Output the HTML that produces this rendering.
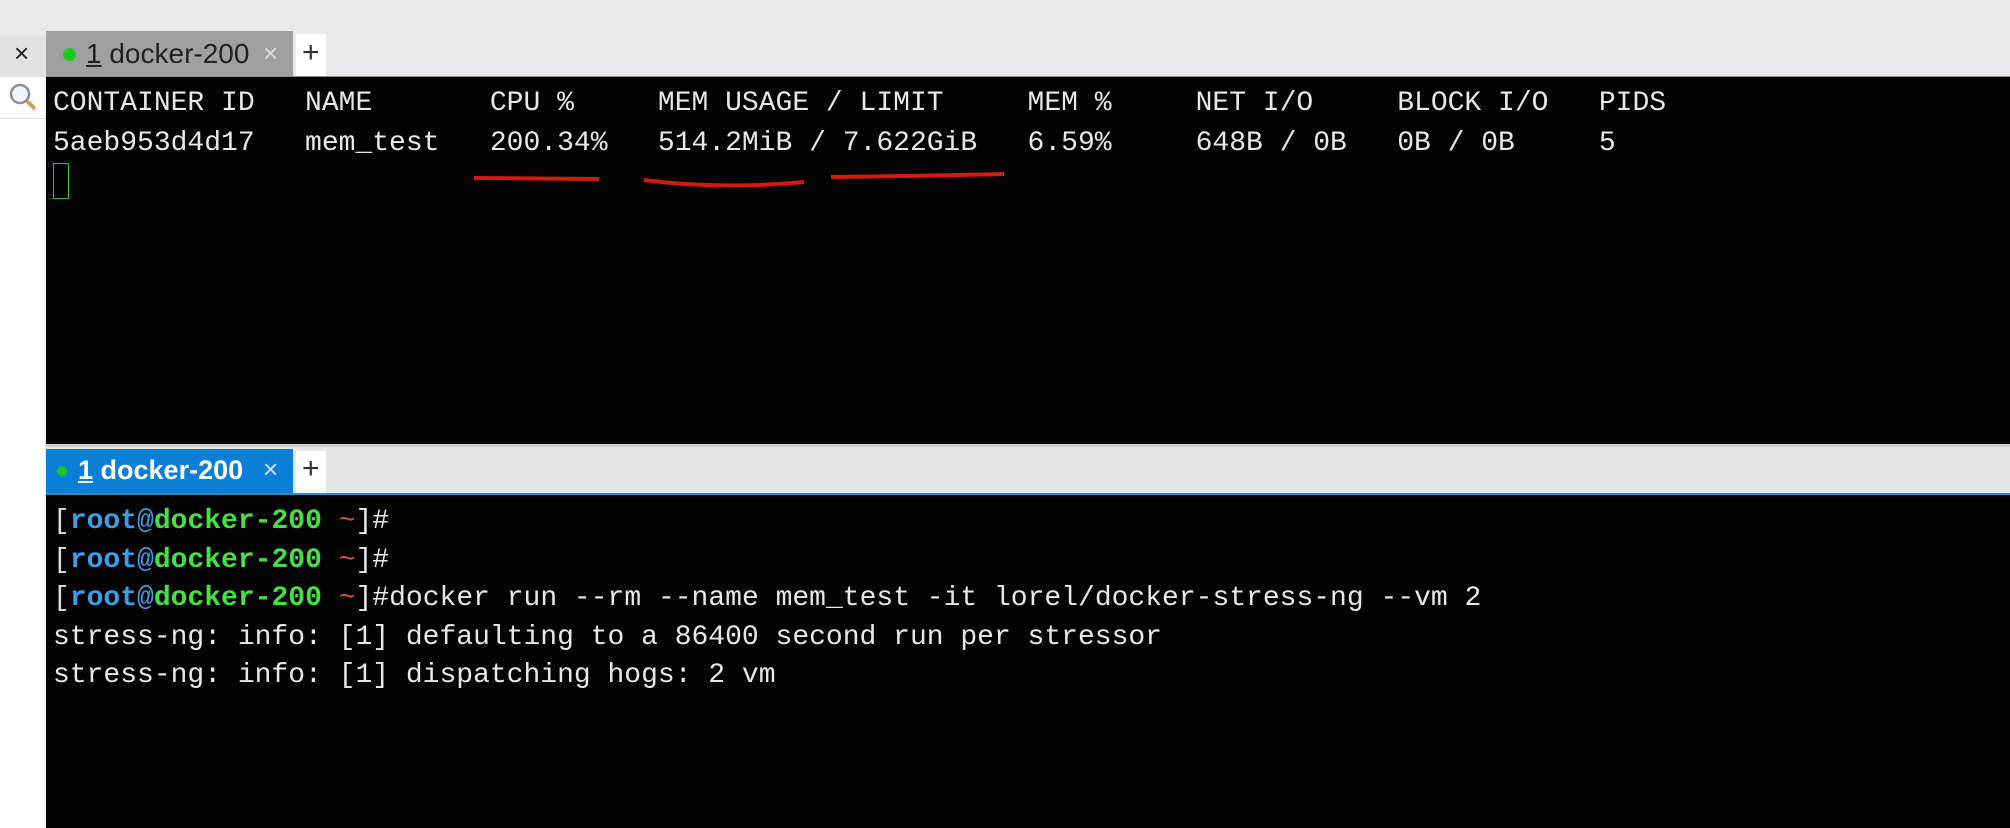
<!DOCTYPE html>
<html><head><meta charset="utf-8"><style>
html,body{margin:0;padding:0}
body{width:2010px;height:828px;position:relative;background:#e9e8eb;overflow:hidden;font-family:"Liberation Sans",sans-serif}
.abs{position:absolute}
.mono{font-family:"Liberation Mono","DejaVu Sans Mono",monospace;font-size:28px;white-space:pre;color:#e8e8e8}
</style></head><body>
<!-- left panel -->
<div class="abs" style="left:0;top:77px;width:45px;height:751px;background:#fff"></div>
<div class="abs" style="left:0;top:118px;width:45px;height:1px;background:#ddd"></div>
<div class="abs" style="left:0;top:36px;width:45px;height:41px;background:#e2e2e2"></div>
<div class="abs" style="left:14px;top:38px;font-size:26px;color:#222">×</div>
<svg class="abs" style="left:6px;top:80px" width="34" height="34"><circle cx="14" cy="14" r="9" fill="#f2f4f6" stroke="#8a8f96" stroke-width="2.5"/><line x1="21" y1="21" x2="29" y2="29" stroke="#d89a55" stroke-width="4"/></svg>
<!-- top tab -->
<div class="abs" style="left:46px;top:31px;width:247px;height:46px;background:#a0a0a0"></div>
<div class="abs" style="left:63px;top:48px;width:13px;height:13px;border-radius:50%;background:#1cc81c"></div>
<div class="abs" style="left:86px;top:38px;font-size:28px;color:#222"><u>1</u> docker-200</div>
<div class="abs" style="left:263px;top:38px;font-size:26px;color:#ddd">×</div>
<div class="abs" style="left:296px;top:34px;width:30px;height:43px;background:#fff"></div>
<div class="abs" style="left:302px;top:36px;font-size:30px;color:#333">+</div>
<div class="abs" style="left:46px;top:76px;width:1964px;height:1px;background:#888"></div>
<!-- top terminal -->
<div class="abs" style="left:46px;top:77px;width:1964px;height:367px;background:#030304"></div>
<div class="abs mono" style="left:53px;top:84px;line-height:40px">CONTAINER ID   NAME       CPU %     MEM USAGE / LIMIT     MEM %     NET I/O     BLOCK I/O   PIDS
5aeb953d4d17   mem_test   200.34%   514.2MiB / 7.622GiB   6.59%     648B / 0B   0B / 0B     5</div>
<div class="abs" style="left:53px;top:163px;width:14px;height:34px;border:1.5px solid #2ec42e"></div>
<svg class="abs" style="left:0;top:0" width="2010" height="300">
<path d="M474 178 L599 179" stroke="#d41a10" stroke-width="4" fill="none"/>
<path d="M644 180 Q720 190 804 182" stroke="#d41a10" stroke-width="4" fill="none"/>
<path d="M831 177 Q920 176 1004 174" stroke="#d41a10" stroke-width="4" fill="none"/>
</svg>
<!-- bottom tab bar -->
<div class="abs" style="left:46px;top:444px;width:1964px;height:3px;background:#cfcfcf"></div>
<div class="abs" style="left:46px;top:447px;width:1964px;height:46px;background:#e6e6e4"></div>
<div class="abs" style="left:46px;top:449px;width:247px;height:44px;background:#0b7fd6"></div>
<div class="abs" style="left:57px;top:466px;width:10px;height:10px;border-radius:50%;background:#1cc81c"></div>
<div class="abs" style="left:78px;top:455px;font-size:27px;color:#fff;font-weight:bold"><u>1</u> docker-200</div>
<div class="abs" style="left:263px;top:454px;font-size:26px;color:#cfe4f7">×</div>
<div class="abs" style="left:296px;top:451px;width:30px;height:42px;background:#fff"></div>
<div class="abs" style="left:302px;top:452px;font-size:30px;color:#333">+</div>
<div class="abs" style="left:46px;top:493px;width:1964px;height:2px;background:#2a8bd0"></div>
<!-- bottom terminal -->
<div class="abs" style="left:46px;top:495px;width:1964px;height:333px;background:#030304"></div>
<div class="abs mono" style="left:53px;top:503px;line-height:38.5px"><span style="color:#ddd">[</span><span style="color:#3d9ee8;font-weight:bold">root</span><span style="color:#3d9ee8">@</span><span style="color:#44e044;font-weight:bold">docker-200 </span><span style="color:#e04848">~</span>]#
<span style="color:#ddd">[</span><span style="color:#3d9ee8;font-weight:bold">root</span><span style="color:#3d9ee8">@</span><span style="color:#44e044;font-weight:bold">docker-200 </span><span style="color:#e04848">~</span>]#
<span style="color:#ddd">[</span><span style="color:#3d9ee8;font-weight:bold">root</span><span style="color:#3d9ee8">@</span><span style="color:#44e044;font-weight:bold">docker-200 </span><span style="color:#e04848">~</span>]#docker run --rm --name mem_test -it lorel/docker-stress-ng --vm 2
stress-ng: info: [1] defaulting to a 86400 second run per stressor
stress-ng: info: [1] dispatching hogs: 2 vm</div>
</body></html>
